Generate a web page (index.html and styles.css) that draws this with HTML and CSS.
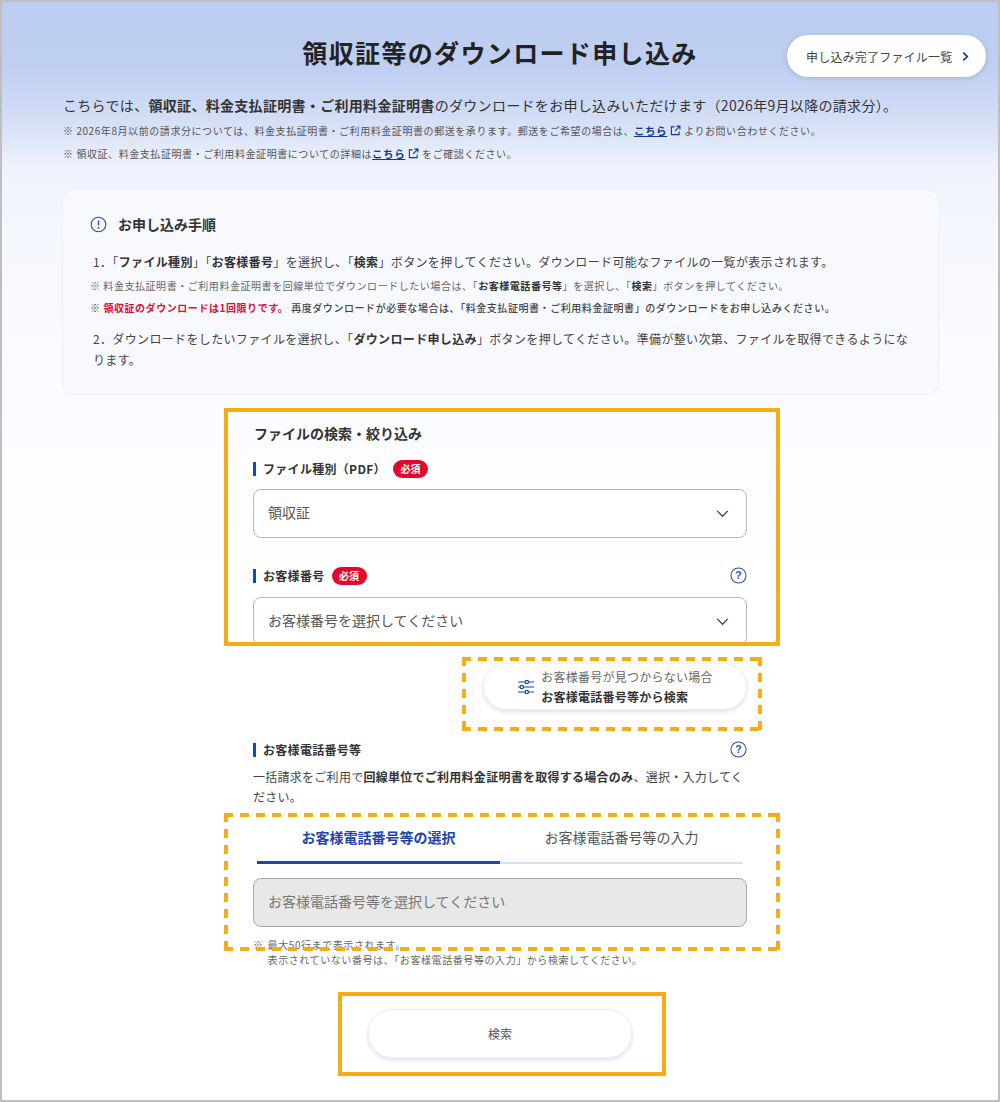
FILE: index.html
```html
<!DOCTYPE html>
<html lang="ja">
<head>
<meta charset="utf-8">
<title>領収証等のダウンロード申し込み</title>
<link rel="stylesheet" href="styles.css">
</head>
<body>
<main class="page">
  <header class="head">
    <h1 class="title">領収証等のダウンロード申し込み</h1>
    <a class="pill-link">申し込み完了ファイル一覧
      <svg class="chev-r" viewBox="0 0 8 12" width="7" height="11"><path d="M1.5 1.5 6 6l-4.500 4.500" fill="none" stroke="#12398f" stroke-width="2"/></svg>
    </a>
  </header>

  <section class="intro">
    <p class="lead">こちらでは、<b>領収証、料金支払証明書・ご利用料金証明書</b>のダウンロードをお申し込みいただけます（2026年9月以降の請求分）。</p>
    <p class="note note-top">※ 2026年8月以前の請求分については、料金支払証明書・ご利用料金証明書の郵送を承ります。郵送をご希望の場合は、<a class="link">こちら</a><svg class="ext" viewBox="0 0 12 12" width="11" height="11"><path d="M5 2H1.500v8.500H10V7M7 1.200h3.800V5M10.500 1.500 5.500 6.500" fill="none" stroke="#12398f" stroke-width="1.200"/></svg> よりお問い合わせください。</p>
    <p class="note note-next">※ 領収証、料金支払証明書・ご利用料金証明書についての詳細は<a class="link">こちら</a><svg class="ext" viewBox="0 0 12 12" width="11" height="11"><path d="M5 2H1.500v8.500H10V7M7 1.200h3.800V5M10.500 1.500 5.500 6.500" fill="none" stroke="#12398f" stroke-width="1.200"/></svg> をご確認ください。</p>
  </section>

  <section class="card">
    <h2 class="card-title">
      <svg viewBox="0 0 18 18" width="17" height="17"><circle cx="9" cy="9" r="7.700" fill="none" stroke="#2f4fb0" stroke-width="1.200"/><path d="M9 4.800v5.200" stroke="#2f4fb0" stroke-width="1.500"/><circle cx="9" cy="12.600" r="1" fill="#2f4fb0"/></svg>
      お申し込み手順
    </h2>
    <p class="step">1．「<b>ファイル種別</b>」「<b>お客様番号</b>」を選択し、「<b>検索</b>」ボタンを押してください。ダウンロード可能なファイルの一覧が表示されます。</p>
    <p class="step-note">※ 料金支払証明書・ご利用料金証明書を回線単位でダウンロードしたい場合は、「<b>お客様電話番号等</b>」を選択し、「<b>検索</b>」ボタンを押してください。</p>
    <p class="step-note strong">※ <b class="red">領収証のダウンロードは1回限りです。</b> 再度ダウンロードが必要な場合は、「料金支払証明書・ご利用料金証明書」のダウンロードをお申し込みください。</p>
    <p class="step step-two">2．ダウンロードをしたいファイルを選択し、「<b>ダウンロード申し込み</b>」ボタンを押してください。準備が整い次第、ファイルを取得できるようになります。</p>
  </section>

  <section class="form">
    <h3 class="form-title">ファイルの検索・絞り込み</h3>

    <div class="label-row label-first">
      <span class="label">ファイル種別（PDF）</span><span class="req">必須</span>
    </div>
    <div class="select select-first">領収証
      <svg class="chev-d" viewBox="0 0 14 9" width="13" height="8"><path d="M1 1l6 6 6-6" fill="none" stroke="#444" stroke-width="1.500"/></svg>
    </div>

    <div class="label-row label-second">
      <span class="label">お客様番号</span><span class="req">必須</span>
      <svg class="help" viewBox="0 0 18 18" width="17" height="17"><circle cx="9" cy="9" r="8" fill="none" stroke="#2f4fb0" stroke-width="1.100"/><text x="9" y="13" text-anchor="middle" class="help-q">?</text></svg>
    </div>
    <div class="select">お客様番号を選択してください
      <svg class="chev-d" viewBox="0 0 14 9" width="13" height="8"><path d="M1 1l6 6 6-6" fill="none" stroke="#444" stroke-width="1.500"/></svg>
    </div>

    <div class="alt-row">
      <button class="alt-btn">
        <svg viewBox="0 0 18 18" width="18" height="18"><g fill="none" stroke="#1f44a8" stroke-width="1.200"><path d="M1 4h7M11.500 4H17M1 9h2M6.500 9H17M1 14h7M11.500 14H17"/><circle cx="9.800" cy="4" r="1.700"/><circle cx="4.800" cy="9" r="1.700"/><circle cx="9.800" cy="14" r="1.700"/></g></svg>
        <span class="alt-text"><span>お客様番号が見つからない場合</span><b>お客様電話番号等から検索</b></span>
      </button>
    </div>

    <div class="label-row label-third">
      <span class="label">お客様電話番号等</span>
      <svg class="help" viewBox="0 0 18 18" width="17" height="17"><circle cx="9" cy="9" r="8" fill="none" stroke="#2f4fb0" stroke-width="1.100"/><text x="9" y="13" text-anchor="middle" class="help-q">?</text></svg>
    </div>
    <p class="desc">一括請求をご利用で<b>回線単位でご利用料金証明書を取得する場合のみ</b>、選択・入力してください。</p>

    <div class="tabs">
      <div class="tab active">お客様電話番号等の選択</div>
      <div class="tab">お客様電話番号等の入力</div>
    </div>
    <div class="select disabled">お客様電話番号等を選択してください</div>
    <div class="limit">
      <span>※</span>
      <p>最大50行まで表示されます。<br>表示されていない番号は、「お客様電話番号等の入力」から検索してください。</p>
    </div>

    <div class="search-row"><button class="search-btn">検索</button></div>
  </section>

  <div class="mark solid mark-a"></div>
  <div class="mark dashed mark-b"></div>
  <div class="mark dashed mark-c"></div>
  <div class="mark solid mark-d"></div>
</main>
</body>
</html>
```
FILE: styles.css
```css
* { box-sizing: border-box; }
html, body { margin: 0; padding: 0; }
body {
  width: 1000px;
  height: 1102px;
  overflow: hidden;
  font-family: "Noto Sans CJK JP", "Noto Sans", sans-serif;
  color: #333;
  background: #fff;
}
p, h1, h2, h3 { margin: 0; }
.page {
  position: relative;
  width: 1000px;
  height: 1102px;
  border: 2px solid #bfbfbf;
  background: linear-gradient(180deg, #bccdf1 0, #bfcff2 65px, #d5dff6 120px, #eef2fc 165px, #f5f8fe 240px, #f8f9fe 300px, #fbfcff 400px, #ffffff 600px);
}
.head {
  display: grid;
  grid-template-columns: 1fr auto 1fr;
  height: 42px;
  margin-top: 33px;
}
.title {
  grid-column: 2;
  align-self: start;
  font-size: 25px;
  line-height: 34px;
  font-weight: 700;
  letter-spacing: 1.35px;
  color: #222;
  white-space: nowrap;
}
.pill-link {
  grid-column: 3;
  justify-self: end;
  display: flex;
  align-items: center;
  gap: 10px;
  width: 199px;
  height: 42px;
  margin-right: 12px;
  padding-left: 19px;
  border-radius: 21px;
  background: #fff;
  box-shadow: 0 1px 5px rgba(60, 80, 140, .25);
  font-size: 12px;
  letter-spacing: .2px;
  color: #444;
  white-space: nowrap;
}
.intro { margin: 17px 0 0 61px; }
.lead { font-size: 14px; line-height: 22px; letter-spacing: .31px; white-space: nowrap; }
.note { font-size: 10px; line-height: 16px; color: #555; letter-spacing: .57px; white-space: nowrap; }
.note-top { margin-top: 7px; }
.note-next { margin-top: 7px; }
.link { color: #12398f; font-weight: 700; text-decoration: underline; font-size: 10.5px; }
.ext { vertical-align: -1px; margin-left: 3px; }

.card {
  width: 877px;
  height: 206px;
  margin: 27px 0 0 60px;
  padding: 24px 28px 0 27px;
  background: #f8f9fe;
  border: 1px solid #f0f1f6;
  border-radius: 12px;
}
.card-title {
  display: flex;
  align-items: center;
  gap: 11px;
  font-size: 14px;
  line-height: 20px;
  font-weight: 700;
  color: #333;
}
.step { font-size: 12px; line-height: 21px; letter-spacing: .35px; padding-left: 3px; margin-top: 17px; color: #444; }
.step b, .step-note b { color: #333; }
.step-note { font-size: 10px; line-height: 16px; letter-spacing: .55px; color: #666; margin-top: 6px; white-space: nowrap; }
.step-note.strong { color: #444; margin-top: 6px; font-weight: 500; letter-spacing: .56px; }
.step-note .red, .red { color: #dc0d36; }
.step-two { margin-top: 12px; }

.form { width: 494px; margin: 28px 0 0 251px; }
.form-title { font-size: 14px; line-height: 20px; font-weight: 700; color: #333; padding-left: 1px; }
.label-row { display: flex; align-items: center; height: 18px; }
.label-first { margin-top: 17px; }
.label-second { margin-top: 29px; }
.label-third { margin-top: 31px; }
.label {
  border-left: 3px solid #0b4cc0;
  height: 14px;
  line-height: 14px;
  padding-left: 7px;
  font-size: 12px;
  font-weight: 700;
  letter-spacing: .3px;
  color: #333;
}
.req {
  margin-left: 7px;
  width: 35px;
  height: 18px;
  border-radius: 9px;
  background: #e20a2c;
  color: #fff;
  font-size: 10px;
  line-height: 18px;
  font-weight: 700;
  text-align: center;
}
.help { margin-left: auto; margin-bottom: 2px; }
.help-q { font-size: 11px; font-weight: 700; fill: #2f4fb0; font-family: "Liberation Sans", sans-serif; }
.select {
  position: relative;
  display: flex;
  align-items: center;
  height: 49px;
  margin-top: 12px;
  padding: 0 0 3px 14px;
  border: 1px solid #b8b8c0;
  border-radius: 8px;
  background: #fff;
  font-size: 14px;
  color: #555;
}
.select-first { margin-top: 11px; }
.chev-d { position: absolute; right: 17px; top: 20px; }
.alt-row { display: flex; justify-content: flex-end; margin-top: 17px; }
.alt-btn {
  display: flex;
  align-items: center;
  justify-content: center;
  gap: 6px;
  width: 264px;
  height: 47px;
  padding: 0;
  border: 1px solid #f0f0f3;
  border-radius: 24px;
  background: #fff;
  box-shadow: 0 2px 5px rgba(0, 0, 0, .12);
  font-family: inherit;
}
.alt-text {
  display: flex;
  flex-direction: column;
  align-items: flex-start;
  font-size: 12px;
  line-height: 20px;
  letter-spacing: .25px;
  color: #666;
}
.alt-text b { color: #333; }
.desc { font-size: 12px; line-height: 20px; letter-spacing: .27px; margin-top: 8px; color: #444; }
.desc b { color: #333; }

.tabs { display: flex; margin: 20px 4px 0; }
.tab {
  flex: 1;
  height: 37px;
  text-align: center;
  font-size: 14px;
  line-height: 20px;
  color: #555;
  border-bottom: 2px solid #d8dff2;
}
.tab.active {
  color: #1f44a8;
  font-weight: 700;
  border-bottom: 3px solid #0b4cc0;
}
.select.disabled {
  margin-top: 14px;
  background: #e8e8e8;
  border-color: #a8a8a8;
  color: #777;
}
.limit { display: flex; gap: 4px; margin-top: 10px; font-size: 10px; line-height: 15px; letter-spacing: .58px; color: #666; }
.limit p { white-space: nowrap; }
.search-row { display: flex; justify-content: center; margin-top: 42px; }
.search-btn {
  width: 264px;
  height: 49px;
  border: 1px solid #f0f0f3;
  border-radius: 25px;
  background: #fff;
  box-shadow: 0 2px 5px rgba(0, 0, 0, .12);
  font-family: inherit;
  font-size: 12px;
  color: #555;
}

.mark { position: absolute; pointer-events: none; }
.solid { border: 4px solid #f7ab14; }
.dashed {
  background-image:
    linear-gradient(90deg, #f7ab14 9px, transparent 9px),
    linear-gradient(90deg, #f7ab14 9px, transparent 9px),
    linear-gradient(180deg, #f7ab14 9px, transparent 9px),
    linear-gradient(180deg, #f7ab14 9px, transparent 9px);
  background-size: 16px 4px, 16px 4px, 4px 16px, 4px 16px;
  background-position: 0 0, 0 100%, 0 0, 100% 0;
  background-repeat: repeat-x, repeat-x, repeat-y, repeat-y;
}
.mark-a { left: 222px; top: 406px; width: 556px; height: 238px; }
.mark-b { left: 460px; top: 655px; width: 300px; height: 74px; }
.mark-c { left: 222px; top: 811px; width: 556px; height: 138px; }
.mark-d { left: 336px; top: 990px; width: 328px; height: 84px; }
```
